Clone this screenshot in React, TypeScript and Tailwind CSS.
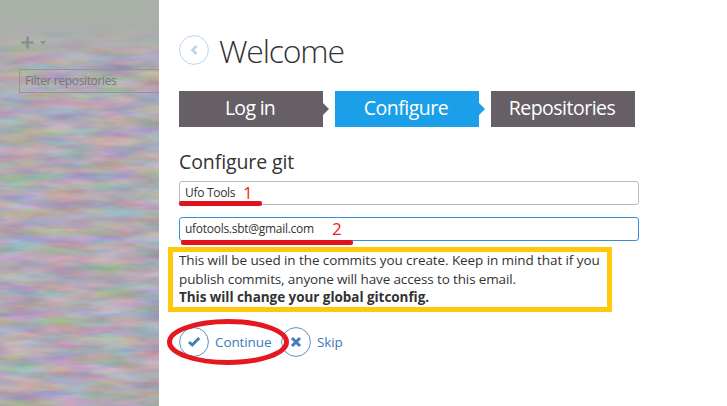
import React from "react";

const steps = [
  { label: "Log in", active: false, tracking: "tracking-[-0.7px]" },
  { label: "Configure", active: true, tracking: "tracking-[-0.5px]" },
  { label: "Repositories", active: false, tracking: "tracking-[-0.5px]" },
];

function Sidebar() {
  return (
    <aside className="relative h-full w-[159px] shrink-0 overflow-hidden bg-[#b0acb0]">
      <svg className="absolute inset-0" width="159" height="406" aria-hidden="true">
        <filter id="grain" x="0" y="0" width="100%" height="100%" colorInterpolationFilters="sRGB">
          <feTurbulence type="fractalNoise" baseFrequency="0.022 0.11" numOctaves="3" seed="8" />
          <feColorMatrix values="0.36 0 0 0 0.51  0 0.28 0 0 0.525  0 0 0.38 0 0.51  0 0 0 0 1" />
        </filter>
        <linearGradient id="top" x1="0" y1="0" x2="0" y2="1">
          <stop offset="0.3" stopColor="#a9b0a7" />
          <stop offset="1" stopColor="#b0acb0" stopOpacity="0" />
        </linearGradient>
        <rect width="159" height="406" filter="url(#grain)" />
        <rect width="159" height="70" fill="url(#top)" />
      </svg>
      <div className="relative pt-[36px] pl-[19px]">
        <div className="flex h-[13px] items-center gap-[6px] pl-[2px]">
          <svg width="13" height="13" viewBox="0 0 13 13" aria-hidden="true">
            <path d="M6.5 0.5v12M0.5 6.5h12" stroke="#849092" strokeWidth="2.6" />
          </svg>
          <svg width="6" height="4" viewBox="0 0 6 4" aria-hidden="true">
            <path d="M0 0h6L3 4z" fill="#899496" />
          </svg>
        </div>
        <div className="mt-[20px] flex h-[24px] items-center border border-r-0 border-[#91998f] pl-[5px] text-[12px] tracking-[-0.35px] whitespace-nowrap text-[#747773]">
          Filter repositories
        </div>
      </div>
    </aside>
  );
}

export default function App() {
  return (
    <div className="relative flex h-[406px] w-[727px] overflow-hidden bg-white font-['Open_Sans','Noto_Sans',sans-serif] text-[#333]">
      <Sidebar />
      <main className="flex flex-col items-start pt-[32px] pl-[20px]">
        <header className="flex h-[40px] items-center gap-[10px]">
          <svg className="-mt-[4px]" width="30" height="30" viewBox="0 0 30 30" fill="none" aria-hidden="true">
            <circle cx="15" cy="15" r="14.4" stroke="#bcd3ec" />
            <path d="M17.5 11l-4 4 4 4" stroke="#bfd2ec" strokeWidth="2.6" />
          </svg>
          <h1 className="-mt-[2px] text-[32px] leading-[40px] font-light tracking-[-1.2px]">Welcome</h1>
        </header>
        <nav className="mt-[19px] flex gap-[12px]">
          {steps.map((s, i) => (
            <div
              key={s.label}
              className={`relative flex h-[36px] w-[144px] items-center justify-center pr-[2px] pb-[2px] text-[19.5px] text-white ${s.tracking} ${s.active ? "bg-[#1b9fe8]" : "bg-[#666066]"}`}
            >
              {s.label}
              {i < 2 && (
                <svg className="absolute top-[12px] left-[144px]" width="6" height="12" viewBox="0 0 6 12" aria-hidden="true">
                  <path d="M0 0l6 6-6 6z" fill={s.active ? "#1b9fe8" : "#666066"} />
                </svg>
              )}
            </div>
          ))}
        </nav>
        <h2 className="mt-[23px] h-[31px] text-[19.5px] leading-[24px] tracking-[-0.1px]">Configure git</h2>
        <div className="relative flex h-[24px] w-[460px] items-center rounded-[3px] border border-[#bdb8bd] pl-[5px] text-[12px]">
          <span className="tracking-[-0.3px]">Ufo Tools</span>
          <span className="absolute top-[2px] left-[63px] text-[17px] leading-none text-[#ed1c24]">1</span>
          <i className="absolute top-[19px] -left-px h-[5px] w-[83px] rounded-[2px] bg-[#e0121b]" />
        </div>
        <div className="relative mt-[12px] flex h-[24px] w-[460px] items-center rounded-[3px] border border-[#3990d8] pl-[5px] text-[12px]">
          <span className="tracking-[-0.28px]">ufotools.sbt@gmail.com</span>
          <span className="absolute top-[2px] left-[152px] text-[17px] leading-none text-[#ed1c24]">2</span>
          <i className="absolute top-[22px] left-[1px] h-[5px] w-[172px] rounded-[2px] bg-[#e0121b]" />
        </div>
        <div className="mt-[6px] -ml-[11px] h-[65px] w-[444px] border-5 border-[#fec80b] pl-[6px] text-[13.5px] leading-[18.5px] whitespace-nowrap">
          <div className="-mt-[1px]">
            <p className="tracking-[-0.09px]">This will be used in the commits you create. Keep in mind that if you</p>
            <p className="tracking-[-0.13px]">publish commits, anyone will have access to this email.</p>
            <p className="font-bold tracking-[-0.05px]">This will change your global gitconfig.</p>
          </div>
        </div>
        <div className="relative mt-[15px] flex h-[30px] items-center text-[13.5px] text-[#4078bb]">
          <div className="flex w-[102px] items-center gap-[6px]">
            <svg width="30" height="30" viewBox="0 0 30 30" fill="none" aria-hidden="true">
              <circle cx="15" cy="15" r="14.4" stroke="#5b91bd" />
              <path d="M10 15l3.2 3 7-7" stroke="#427dbc" strokeWidth="3" />
            </svg>
            <span className="tracking-[-0.1px]">Continue</span>
          </div>
          <div className="flex items-center gap-[6px]">
            <svg width="30" height="30" viewBox="0 0 30 30" fill="none" aria-hidden="true">
              <circle cx="15" cy="15" r="14.4" stroke="#5b91bd" />
              <path d="M11 11l8 8M19 11l-8 8" stroke="#427dbc" strokeWidth="3" />
            </svg>
            <span className="tracking-[-0.1px]">Skip</span>
          </div>
          <svg className="absolute -top-[8px] -left-[13px]" width="124" height="46" viewBox="0 0 124 46" fill="none" aria-hidden="true">
            <ellipse cx="62" cy="23" rx="58.5" ry="20.5" stroke="#e51820" strokeWidth="5" />
          </svg>
        </div>
      </main>
    </div>
  );
}
